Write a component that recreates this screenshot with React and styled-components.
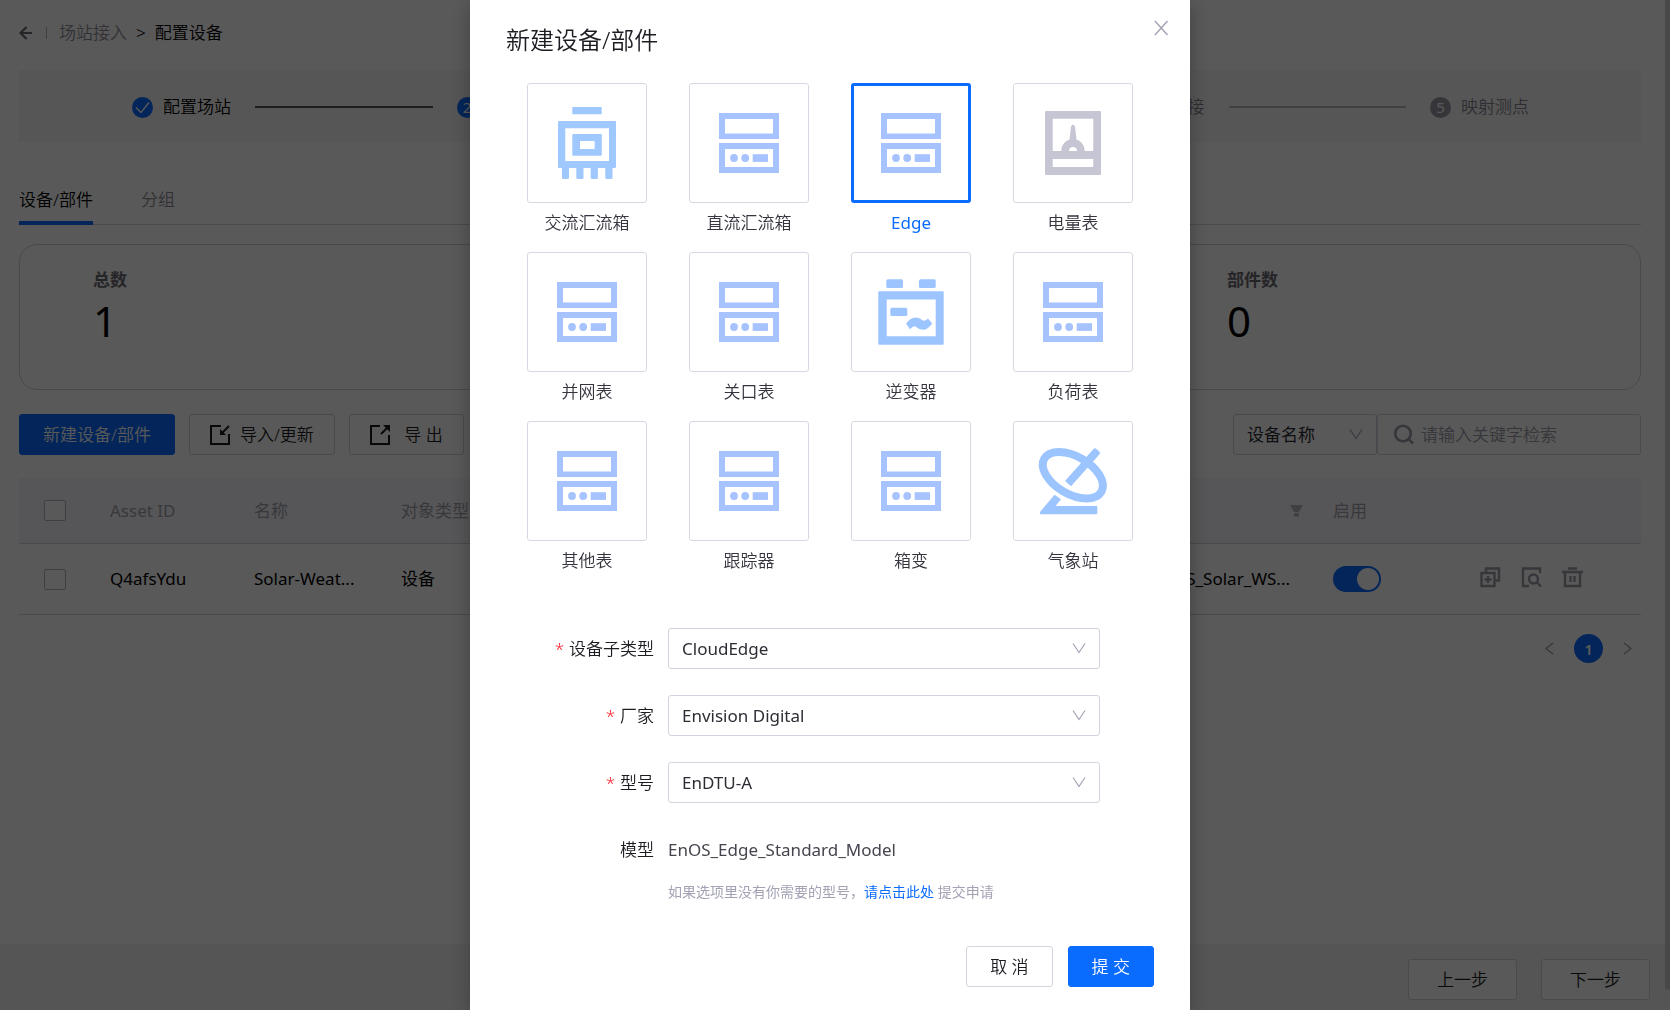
import React, { useState } from 'react'
import styled, { createGlobalStyle, css } from 'styled-components'

const GlobalStyle = createGlobalStyle`
  * {
    box-sizing: border-box;
  }

  body {
    margin: 0;
    background: #fff;
    color: #000;
    font-family: 'Noto Sans', 'Noto Sans CJK SC', sans-serif;
    font-size: 17px;
    font-weight: 350;
    line-height: 26px;
    overflow: hidden;
  }

  button, input, select {
    font: inherit;
    color: inherit;
  }
`

/* ---------- page ---------- */

const Page = styled.div`
  display: flex;
  flex-direction: column;
  min-height: 100vh;
  padding-right: 5px;
`

const Content = styled.main`
  flex: 1;
  padding: 0 24px 0 19px;
`

const Breadcrumb = styled.nav`
  display: flex;
  align-items: center;
  height: 70px;
  padding-bottom: 4px;

  svg {
    color: #6c6c78;
  }

  a {
    color: #8e8e98;
    text-decoration: none;
  }
`

const CrumbLine = styled.span`
  width: 1px;
  height: 12px;
  margin: 0 12px 0 13px;
  background: #b4b4bc;
`

const CrumbArrow = styled.span`
  margin: 0 9px;
`

const Steps = styled.ol`
  display: flex;
  align-items: center;
  gap: 24px;
  height: 72px;
  margin: 0;
  padding: 2px 112px 0 113px;
  list-style: none;
  background: #f7f7f7;
`

const Step = styled.li`
  display: flex;
  align-items: center;
  gap: 10px;
  color: ${(p) => (p.$waiting ? '#84848f' : '#000')};
`

const StepDot = styled.span`
  display: flex;
  align-items: center;
  justify-content: center;
  width: 21px;
  height: 21px;
  border-radius: 50%;
  background: ${(p) => (p.$waiting ? '#9a9aa6' : '#0a6cff')};
  color: #fff;
  font-size: 15px;
  font-weight: 400;
  line-height: 21px;
`

const StepLine = styled.li`
  flex: 1;
  height: 2px;
  background: ${(p) => (p.$waiting ? '#b9b9c4' : '#5a5a60')};
`

const Tabs = styled.div`
  display: flex;
  gap: 48px;
  margin-top: 35px;
  border-bottom: 1px solid #d6d6dc;
`

const Tab = styled.button`
  height: 48px;
  margin-bottom: -1px;
  padding: 2px 0 0;
  border: 0;
  border-bottom: 4px solid ${(p) => (p.$active ? '#0a6cff' : 'transparent')};
  background: none;
  color: ${(p) => (p.$active ? '#000' : '#8e8e98')};
`

const Stats = styled.section`
  display: grid;
  grid-template-columns: 35% 35% 30%;
  height: 146px;
  margin-top: 19px;
  padding-top: 22px;
  border: 1px solid #d0d0d6;
  border-radius: 18px;
`

const Stat = styled.div`
  padding-left: 73px;
`

const StatName = styled.div`
  color: #6a6a74;
  font-weight: 700;
`

const StatValue = styled.div`
  font-size: 42px;
  font-weight: 400;
  line-height: 56px;
`

const Toolbar = styled.div`
  display: flex;
  gap: 14px;
  margin: 24px 0 23px;
`

const Button = styled.button`
  display: inline-flex;
  align-items: center;
  justify-content: center;
  gap: 10px;
  height: 41px;
  padding: 0 ${(p) => p.$pad || 20}px;
  border: 1px solid #d4d4de;
  border-radius: 3px;
  background: #fff;
  color: #1c1c22;
  white-space: pre;

  ${(p) =>
    p.$primary &&
    css`
      border-color: #0a6cff;
      background: #0a6cff;
      color: #fff;
    `}
`

const Search = styled.div`
  display: flex;
  margin-left: auto;
`

const SearchBox = styled.label`
  display: flex;
  align-items: center;
  gap: 7px;
  width: 264px;
  height: 41px;
  padding: 0 15px;
  border: 1px solid #d4d4de;
  border-radius: 3px;
  color: #9c9ca8;

  svg {
    flex: none;
  }

  input {
    width: 100%;
    padding: 0;
    border: 0;
    outline: 0;
    background: none;
  }

  input::placeholder {
    color: #9a9aa8;
    opacity: 1;
  }
`

const SelectWrap = styled.div`
  position: relative;
  width: ${(p) => p.$width};

  select {
    width: 100%;
    height: 41px;
    padding: 0 36px 0 13px;
    border: 1px solid #d4d4de;
    border-radius: 3px;
    background: #fff;
    color: #2c2c34;
    font-weight: 400;
    appearance: none;
  }

  svg {
    position: absolute;
    top: 14px;
    right: 14px;
    color: #a2a2b4;
    pointer-events: none;
  }
`

const Table = styled.table`
  width: 100%;
  border-collapse: separate;
  border-spacing: 0;
  table-layout: fixed;

  th, td {
    padding: 0 17px;
    border-bottom: 1px solid #d4d4de;
    font-weight: 400;
    text-align: left;
    white-space: nowrap;
    overflow: hidden;
    text-overflow: ellipsis;
  }

  th {
    height: 66px;
    background: #f7f7fc;
    color: #a2a2ac;
  }

  td {
    height: 71px;
  }

  th:first-child, td:first-child {
    padding: 0 0 0 25px;
  }
`

const Col = styled.col`
  width: ${(p) => (p.$w ? `${p.$w}px` : 'auto')};
`

const HeadCell = styled.div`
  display: flex;
  align-items: center;
  justify-content: space-between;
  margin-right: -4px;
`

const Check = styled.input.attrs({ type: 'checkbox' })`
  display: block;
  width: 22px;
  height: 21px;
  margin: 0;
  border: 1px solid #b4b4be;
  border-radius: 2px;
  background: #fff;
  appearance: none;
`

const Switch = styled.input.attrs({ type: 'checkbox', role: 'switch' })`
  display: block;
  width: 48px;
  height: 26px;
  margin: 0;
  padding: 2px;
  border-radius: 13px;
  background: ${(p) => (p.checked ? '#0a6cff' : '#c4c4cc')};
  appearance: none;

  &::before {
    content: '';
    display: block;
    width: 22px;
    height: 22px;
    margin-left: ${(p) => (p.checked ? '22px' : '0')};
    border-radius: 50%;
    background: #fff;
  }
`

const Actions = styled.div`
  display: flex;
  gap: 20px;
  padding-bottom: 4px;
`

const IconButton = styled.button`
  display: flex;
  padding: 0;
  border: 0;
  background: none;
  color: #9c9ca8;
`

const Pager = styled.div`
  display: flex;
  align-items: center;
  justify-content: flex-end;
  gap: 20px;
  margin-top: 19px;
  padding-right: 9px;
`

const PageNumber = styled.button`
  width: 29px;
  height: 29px;
  padding: 0;
  border: 0;
  border-radius: 50%;
  background: #0a6cff;
  color: #fff;
  font-size: 15px;
  font-weight: 600;
`

const PageFooter = styled.footer`
  display: flex;
  justify-content: flex-end;
  gap: 24px;
  height: 66px;
  margin-right: -5px;
  padding: 15px 20px 0 0;
  background: #f4f4f4;
`

const ScrollThumb = styled.div`
  position: fixed;
  top: 0;
  right: 0;
  bottom: 20px;
  width: 5px;
  border-radius: 0 0 3px 3px;
  background: #cfcfcf;
`

/* ---------- modal ---------- */

const Mask = styled.div`
  position: fixed;
  inset: 0;
  display: flex;
  justify-content: center;
  padding-right: 10px;
  background: rgba(0, 0, 0, 0.65);
  overflow: hidden;
`

const Dialog = styled.div`
  position: relative;
  width: 720px;
  max-width: 100%;
  min-height: 100%;
  padding: 20px 36px;
  background: #fff;
  box-shadow: 0 4px 20px rgba(0, 0, 0, 0.3);
`

const CloseButton = styled.button`
  position: absolute;
  top: 20px;
  right: 20px;
  display: flex;
  padding: 0;
  border: 0;
  background: none;
  color: #a2a2b4;
`

const Title = styled.h2`
  margin: 0 0 23px;
  font-size: 24px;
  font-weight: 350;
  line-height: 40px;
  color: #1c1c22;
`

const DeviceGrid = styled.div`
  display: grid;
  grid-template-columns: repeat(4, 120px);
  justify-content: space-between;
  row-gap: 16px;
  padding: 0 21px;
`

const Device = styled.button`
  display: flex;
  flex-direction: column;
  gap: 7px;
  padding: 0;
  border: 0;
  background: none;
  color: ${(p) => (p.$selected ? '#0a6cff' : '#35353f')};
  font-weight: ${(p) => (p.$selected ? 400 : 350)};
  line-height: 26px;
`

const DeviceBox = styled.span`
  display: flex;
  align-items: center;
  justify-content: center;
  width: 120px;
  height: 120px;
  border: ${(p) => (p.$selected ? '3px solid #0a6cff' : '1px solid #d8d8e2')};
  border-radius: 3px;
`

const DeviceName = styled.span`
  width: 100%;
  text-align: center;
`

const Form = styled.form`
  margin-top: 54px;
`

const Field = styled.div`
  display: flex;
  align-items: center;
  gap: 14px;
  min-height: 41px;
  margin-bottom: ${(p) => (p.$last ? 9 : 26)}px;
  padding-right: 54px;
`

const Label = styled.label`
  width: 148px;
  text-align: right;
  color: #1c1c22;
`

const Required = styled.span`
  margin-right: 5px;
  color: #f5222d;
`

const ModelName = styled.output`
  color: #45454f;
  font-weight: 400;
`

const Hint = styled.p`
  margin: 0 0 0 162px;
  color: #a2a2b4;
  font-size: 14px;
  font-weight: 400;
  line-height: 26px;

  a {
    color: #0a6cff;
    text-decoration: none;
  }
`

const DialogFooter = styled.div`
  display: flex;
  justify-content: flex-end;
  gap: 15px;
  margin-top: 41px;
`

/* ---------- icons ---------- */

const ChevronIcon = () => (
  <svg width='14' height='14' viewBox='0 0 14 14' fill='none' stroke='currentColor' strokeWidth='1.2'>
    <path d='M1 1.500l6 9 6-9' />
  </svg>
)

const CloseIcon = () => (
  <svg width='18' height='16' viewBox='0 0 18 16' fill='none' stroke='currentColor' strokeWidth='1.4'>
    <path d='M3 1l12.500 14M15.500 1L3 15' />
  </svg>
)

const BackIcon = () => (
  <svg width='14' height='14' viewBox='0 0 14 14' fill='none' stroke='currentColor' strokeWidth='2.2'>
    <path d='M13 7H2M7.500 1L1.500 7l6 6' />
  </svg>
)

const TickIcon = () => (
  <svg width='15' height='13' viewBox='0 0 15 13' fill='none' stroke='#fff' strokeWidth='1.4'>
    <path d='M1 6.500l5 5L14 1.500' />
  </svg>
)

const ImportIcon = () => (
  <svg width='20' height='20' viewBox='0 0 20 20' fill='none' stroke='currentColor' strokeWidth='2'>
    <path d='M11 1H1v18h18V9' />
    <path d='M19 1l-8 8' />
    <path d='M10 4v6h6z' fill='currentColor' stroke='none' />
  </svg>
)

const ExportIcon = () => (
  <svg width='20' height='20' viewBox='0 0 20 20' fill='none' stroke='currentColor' strokeWidth='2'>
    <path d='M10 1H1v18h18V10' />
    <path d='M11 9l7-7' />
    <path d='M13 0h7v7z' fill='currentColor' stroke='none' />
  </svg>
)

const SearchIcon = () => (
  <svg width='21' height='21' viewBox='0 0 21 21' fill='none' stroke='currentColor' strokeWidth='2.6'>
    <circle cx='10' cy='9.500' r='7.800' />
    <path d='M15.500 15l4.500 4.500' />
  </svg>
)

const FilterIcon = () => (
  <svg width='13' height='12' viewBox='0 0 13 12' fill='#b8b8c0'>
    <path d='M0 0h13L9 7H4zM4 8h5v3.500H4z' />
  </svg>
)

const CopyIcon = () => (
  <svg width='21' height='21' viewBox='0 0 21 21' fill='none' stroke='currentColor' strokeWidth='2.400'>
    <path d='M6 5V1.500h13v12h-4' />
    <path d='M1.500 6h13v13h-13zM8 9v7M4.500 12.500h7' />
  </svg>
)

const InspectIcon = () => (
  <svg width='21' height='21' viewBox='0 0 21 21' fill='none' stroke='currentColor' strokeWidth='2.400'>
    <path d='M8 19H2V1.500h17V6' />
    <circle cx='12.500' cy='12' r='4.500' />
    <path d='M16 15.500l4 4' />
  </svg>
)

const DeleteIcon = () => (
  <svg width='21' height='21' viewBox='0 0 21 21' fill='none' stroke='currentColor' strokeWidth='2.400'>
    <path d='M6 1.500h9M0 5h21M3 5v14h15V5M8.500 9v6M12.500 9v6' />
  </svg>
)

const ArrowIcon = ({ next }) => (
  <svg width='9' height='14' viewBox='0 0 9 14' fill='none' stroke='#9c9ca8' strokeWidth='1.3'>
    <path d={next ? 'M1 1l7 5.500-7 5.500' : 'M8 1L1 6.500l7 5.500'} />
  </svg>
)

const drawings = {
  combiner: (
    <g fill='#9fc8ff' fillRule='evenodd'>
      <rect x='45.300' y='24' width='29.400' height='7.300' rx='0.500' />
      <path d='M32 38h56q1 0 1 1v45q0 1-1 1H32q-1 0-1-1V39q0-1 1-1zM38.300 45.300v32.700h43.700V45.300z' />
      <path d='M46.300 51h27.500q1 0 1 1v19.700q0 1-1 1H46.300q-1 0-1-1V52q0-1 1-1zM53 58v8h14.700v-8z' />
      <path d='M35 84h7v10.500q0 1.500-1.500 1.500h-4q-1.500 0-1.500-1.500zM49.300 84h7.200v10.500q0 1.500-1.500 1.500h-4.200q-1.500 0-1.500-1.500zM63.700 84h7.200v10.500q0 1.500-1.500 1.500h-4.200q-1.500 0-1.500-1.500zM78.300 84h7.200v10.500q0 1.500-1.500 1.500h-4.200q-1.500 0-1.500-1.500z' />
    </g>
  ),
  server: (
    <g fill='#a6c3ff' fillRule='evenodd'>
      <path d='M30 30h60v26H30zM36 36v14.500h48V36z' />
      <path d='M30 60h60v30H30zM36 66v18h48V66z' />
      <circle cx='45' cy='75' r='3.900' />
      <circle cx='56.200' cy='75' r='3.900' />
      <rect x='63.700' y='71.200' width='15.300' height='7.700' />
    </g>
  ),
  meter: (
    <g fill='#c6c5d3' fillRule='evenodd'>
      <path d='M33 28h54q1 0 1 1v62q0 1-1 1H33q-1 0-1-1V29q0-1 1-1zM39.700 35.700v32.300h40.600V35.700zM39.700 76v8h40.600v-8z' />
      <path d='M48.300 68c0-6 3.500-10 8.200-11.300l1.500-13.200q.4-1.700 2-1.700t2 1.700l1.500 13.200c4.700 1.300 8.200 5.300 8.200 11.300h-7.700a4 4 0 0 0-8 0z' />
    </g>
  ),
  inverter: (
    <g fill='#9cc5ff' fillRule='evenodd'>
      <rect x='35.300' y='27.200' width='16.700' height='8.800' rx='1.500' />
      <rect x='68' y='27.200' width='16.700' height='8.800' rx='1.500' />
      <path d='M28.300 39.300h63.400q1 0 1 1v51.400q0 1-1 1H28.300q-1 0-1-1V40.300q0-1 1-1zM35.700 47.500v36.800h49V47.500z' />
      <rect x='39.300' y='55.700' width='17' height='8.300' rx='1.500' />
      <path d='M55 71.500q4.500-6 9.500-6 4 0 8 3.200Q74.500 69 77 66.500L81.200 71.500q-4.500 6.300-9.200 6.300-4 0-8-3.500-2-.3-5 3z' />
    </g>
  ),
  weather: (
    <g>
      <ellipse cx='59.800' cy='54.200' rx='33' ry='18.800' transform='rotate(30 59.800 54.200)' fill='none' stroke='#9cc5ff' strokeWidth='8' />
      <path d='M52 60l28.500-32q1.500-1.500 3 0l3 2.800q1 1.200 0 2.500L58 65.200z' fill='#9cc5ff' />
      <path d='M41.500 73.800l6.500 4.400-5.500 6.800h40.800q1 0 1 1v6.300q0 1-1 1H28q-2-.8-.8-2.600z' fill='#9cc5ff' />
    </g>
  ),
}

const DeviceIcon = ({ kind }) => (
  <svg width='80' height='80' viewBox='20 20 80 80'>
    {drawings[kind]}
  </svg>
)

/* ---------- data ---------- */

const devices = [
  { name: '交流汇流箱', kind: 'combiner' },
  { name: '直流汇流箱', kind: 'server' },
  { name: 'Edge', kind: 'server' },
  { name: '电量表', kind: 'meter' },
  { name: '并网表', kind: 'server' },
  { name: '关口表', kind: 'server' },
  { name: '逆变器', kind: 'inverter' },
  { name: '负荷表', kind: 'server' },
  { name: '其他表', kind: 'server' },
  { name: '跟踪器', kind: 'server' },
  { name: '箱变', kind: 'server' },
  { name: '气象站', kind: 'weather' },
]

const steps = ['配置场站', '配置设备', '配置通讯', '建立连接', '映射测点']

const fields = [
  { id: 'subtype', label: '设备子类型', value: 'CloudEdge' },
  { id: 'vendor', label: '厂家', value: 'Envision Digital' },
  { id: 'model', label: '型号', value: 'EnDTU-A' },
]

const SelectBox = ({ id, value, label, width = '100%' }) => (
  <SelectWrap $width={width}>
    <select id={id} aria-label={label} defaultValue={value}>
      <option value={value}>{value}</option>
    </select>
    <ChevronIcon />
  </SelectWrap>
)

const StationPage = () => {
  const [enabled, setEnabled] = useState(true)

  return (
    <Page>
      <Content>
        <Breadcrumb>
          <BackIcon />
          <CrumbLine />
          <a href='#station'>场站接入</a>
          <CrumbArrow>&gt;</CrumbArrow>
          <span>配置设备</span>
        </Breadcrumb>

        <Steps>
          {steps.map((name, i) => (
            <React.Fragment key={name}>
              {i > 0 && <StepLine $waiting={i > 1} />}
              <Step $waiting={i > 1}>
                <StepDot $waiting={i > 1}>{i === 0 ? <TickIcon /> : i + 1}</StepDot>
                {name}
              </Step>
            </React.Fragment>
          ))}
        </Steps>

        <Tabs>
          <Tab $active>设备/部件</Tab>
          <Tab>分组</Tab>
        </Tabs>

        <Stats>
          <Stat>
            <StatName>总数</StatName>
            <StatValue>1</StatValue>
          </Stat>
          <Stat>
            <StatName>设备数</StatName>
            <StatValue>1</StatValue>
          </Stat>
          <Stat>
            <StatName>部件数</StatName>
            <StatValue>0</StatValue>
          </Stat>
        </Stats>

        <Toolbar>
          <Button $primary $pad={23}>新建设备/部件</Button>
          <Button>
            <ImportIcon />
            导入/更新
          </Button>
          <Button>
            <ExportIcon />
            {' 导 出'}
          </Button>
          <Search>
            <SelectBox value='设备名称' label='检索字段' width='144px' />
            <SearchBox>
              <SearchIcon />
              <input type='text' placeholder='请输入关键字检索' />
            </SearchBox>
          </Search>
        </Toolbar>

        <Table>
          <colgroup>
            <Col $w={74} />
            <Col $w={144} />
            <Col $w={147} />
            <Col $w={147} />
            <Col />
            <Col $w={180} />
            <Col $w={147} />
            <Col $w={178} />
          </colgroup>
          <thead>
            <tr>
              <th><Check aria-label='全选' /></th>
              <th>Asset ID</th>
              <th>名称</th>
              <th>对象类型</th>
              <th />
              <th>
                <HeadCell>
                  模型
                  <FilterIcon />
                </HeadCell>
              </th>
              <th>启用</th>
              <th />
            </tr>
          </thead>
          <tbody>
            <tr>
              <td><Check aria-label='选择' /></td>
              <td>Q4afsYdu</td>
              <td>Solar-Weat...</td>
              <td>设备</td>
              <td />
              <td>EnOS_Solar_WS...</td>
              <td>
                <Switch aria-label='启用' checked={enabled} onChange={(e) => setEnabled(e.target.checked)} />
              </td>
              <td>
                <Actions>
                  <IconButton aria-label='复制'><CopyIcon /></IconButton>
                  <IconButton aria-label='查看'><InspectIcon /></IconButton>
                  <IconButton aria-label='删除'><DeleteIcon /></IconButton>
                </Actions>
              </td>
            </tr>
          </tbody>
        </Table>

        <Pager>
          <IconButton aria-label='上一页'><ArrowIcon /></IconButton>
          <PageNumber>1</PageNumber>
          <IconButton aria-label='下一页'><ArrowIcon next /></IconButton>
        </Pager>
      </Content>

      <PageFooter>
        <Button $pad={28}>上一步</Button>
        <Button $pad={28}>下一步</Button>
      </PageFooter>
      <ScrollThumb />
    </Page>
  )
}

const NewDeviceDialog = () => {
  const [selected, setSelected] = useState('Edge')

  return (
    <Mask>
      <Dialog role='dialog' aria-labelledby='dialog-title'>
        <CloseButton aria-label='关闭'><CloseIcon /></CloseButton>
        <Title id='dialog-title'>新建设备/部件</Title>

        <DeviceGrid>
          {devices.map(({ name, kind }) => (
            <Device
              key={name}
              type='button'
              aria-pressed={selected === name}
              $selected={selected === name}
              onClick={() => setSelected(name)}
            >
              <DeviceBox $selected={selected === name}>
                <DeviceIcon kind={kind} />
              </DeviceBox>
              <DeviceName>{name}</DeviceName>
            </Device>
          ))}
        </DeviceGrid>

        <Form onSubmit={(e) => e.preventDefault()}>
          {fields.map(({ id, label, value }) => (
            <Field key={id}>
              <Label htmlFor={id}>
                <Required>*</Required>
                {label}
              </Label>
              <SelectBox id={id} value={value} width='432px' />
            </Field>
          ))}
          <Field $last>
            <Label htmlFor='model-name'>模型</Label>
            <ModelName id='model-name'>EnOS_Edge_Standard_Model</ModelName>
          </Field>
          <Hint>
            如果选项里没有你需要的型号，<a href='#apply'>请点击此处</a> 提交申请
          </Hint>
          <DialogFooter>
            <Button type='button' $pad={23}>取 消</Button>
            <Button type='submit' $primary $pad={23}>提 交</Button>
          </DialogFooter>
        </Form>
      </Dialog>
    </Mask>
  )
}

const App = () => (
  <>
    <GlobalStyle />
    <StationPage />
    <NewDeviceDialog />
  </>
)

export default App
